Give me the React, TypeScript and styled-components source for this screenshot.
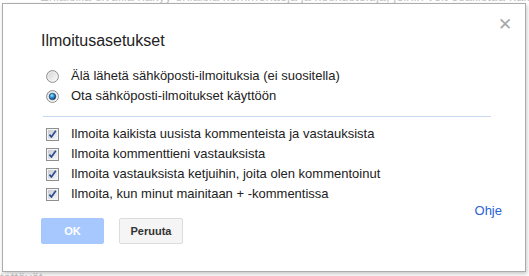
import React from "react";
import styled, { createGlobalStyle } from "styled-components";

const Global = createGlobalStyle`
  html, body { margin: 0; padding: 0; background: #fff; overflow: hidden; }
  body { font-family: "Liberation Sans", Arial, sans-serif; }
`;

const Page = styled.div`
  position: relative;
  width: 529px;
  height: 276px;
  overflow: hidden;
  display: flex;
  flex-direction: column;
  justify-content: space-between;
`;

const FaintLine = styled.div<{ $top?: boolean }>`
  font-size: 13px;
  line-height: 13px;
  color: #c4c4c4;
  white-space: nowrap;
  margin-top: ${(p) => (p.$top ? "-10px" : "0")};
  margin-bottom: ${(p) => (p.$top ? "0" : "-8px")};
  padding-left: ${(p) => (p.$top ? "40px" : "0")};
`;

const Dialog = styled.div`
  position: absolute;
  left: 2px;
  top: 3px;
  width: 524px;
  height: 269px;
  box-sizing: border-box;
  background: #fff;
  border: 1px solid #acacac;
  box-shadow: 1px 2px 4px rgba(0, 0, 0, 0.22);
  padding: 27px 23px 0 38px;
  display: flex;
  flex-direction: column;
  color: #222;
`;

const Close = styled.span`
  position: absolute;
  right: 13px;
  top: 12px;
  font-size: 17px;
  line-height: 17px;
  color: #a8a8a8;
  cursor: pointer;
`;

const Title = styled.div`
  font-size: 16px;
  line-height: 20px;
  color: #222;
  margin-bottom: 15px;
`;

const OptionList = styled.div`
  display: flex;
  flex-direction: column;
`;

const Row = styled.label`
  display: flex;
  align-items: center;
  height: 20px;
  font-size: 13px;
  line-height: 20px;
  padding-left: 5px;
  gap: 12px;
  color: #222;
`;

const Separator = styled.div`
  height: 1px;
  width: 448px;
  margin-left: 2px;
  background: #c9d9f2;
  margin: 10px 0 7px 2px;
`;

const HelpRow = styled.div`
  display: flex;
  justify-content: flex-end;
  height: 14px;
  line-height: 14px;
`;

const HelpLink = styled.a`
  font-size: 13px;
  color: #2a62d8;
  text-decoration: none;
`;

const Buttons = styled.div`
  display: flex;
  gap: 15px;
`;

const Button = styled.button<{ $primary?: boolean }>`
  box-sizing: border-box;
  height: 26px;
  min-width: ${(p) => (p.$primary ? "63px" : "64px")};
  padding: 0 9px;
  border-radius: 2px;
  font-family: "Liberation Sans", Arial, sans-serif;
  font-size: 11px;
  font-weight: bold;
  border: 1px solid ${(p) => (p.$primary ? "#a6c6fd" : "#dcdcdc")};
  background: ${(p) => (p.$primary ? "#a6c8ff" : "#f5f5f5")};
  color: ${(p) => (p.$primary ? "#fff" : "#333")};
`;

const Radio = ({ checked }: { checked?: boolean }) => (
  <svg width="13" height="13" viewBox="0 0 13 13">
    <defs>
      <linearGradient id={`rg${checked ? 1 : 0}`} x1="0" y1="0" x2="1" y2="1">
        <stop offset="0" stopColor="#d0d0d0" />
        <stop offset="1" stopColor="#ffffff" />
      </linearGradient>
      <radialGradient id="dot" cx="0.4" cy="0.35" r="0.7">
        <stop offset="0" stopColor="#a8e4ff" />
        <stop offset="0.45" stopColor="#2e8fd3" />
        <stop offset="1" stopColor="#0b2f5c" />
      </radialGradient>
    </defs>
    <circle cx="6.5" cy="6.5" r="5.9" fill={`url(#rg${checked ? 1 : 0})`} stroke="#8d8d8d" strokeWidth="1" />
    <circle cx="6.5" cy="6.5" r="4.6" fill="none" stroke="#f2f2f2" strokeWidth="0.8" />
    {checked && <circle cx="6.5" cy="6.5" r="3.3" fill="url(#dot)" stroke="#173a66" strokeWidth="0.6" />}
  </svg>
);

const Check = () => (
  <svg width="13" height="13" viewBox="0 0 13 13">
    <defs>
      <linearGradient id="cb" x1="0" y1="0" x2="1" y2="1">
        <stop offset="0" stopColor="#c9ccd3" />
        <stop offset="1" stopColor="#f4f5f7" />
      </linearGradient>
    </defs>
    <rect x="0.5" y="0.5" width="12" height="12" fill="#f4f4f4" stroke="#8e8f8f" />
    <rect x="2" y="2" width="9" height="9" fill="url(#cb)" />
    <path d="M3.4 6.6 L5.4 9 L9.8 2.8" fill="none" stroke="#2b4d8f" strokeWidth="1.7" strokeLinejoin="round" />
  </svg>
);

export default function App() {
  return (
    <>
      <Global />
      <Page>
        <FaintLine $top>
          Erilaisilla sivuilla näkyy erilaisia kommentteja ja keskusteluja, joihin voit osallistua halutessasi
        </FaintLine>
        <FaintLine>tettävät</FaintLine>
        <Dialog>
          <Close>✕</Close>
          <Title>Ilmoitusasetukset</Title>
          <OptionList>
            <Row>
              <Radio />
              Älä lähetä sähköposti-ilmoituksia (ei suositella)
            </Row>
            <Row>
              <Radio checked />
              Ota sähköposti-ilmoitukset käyttöön
            </Row>
          </OptionList>
          <Separator />
          <OptionList>
            <Row>
              <Check />
              Ilmoita kaikista uusista kommenteista ja vastauksista
            </Row>
            <Row>
              <Check />
              Ilmoita kommenttieni vastauksista
            </Row>
            <Row>
              <Check />
              Ilmoita vastauksista ketjuihin, joita olen kommentoinut
            </Row>
            <Row>
              <Check />
              Ilmoita, kun minut mainitaan + -kommentissa
            </Row>
          </OptionList>
          <HelpRow>
            <HelpLink href="#">Ohje</HelpLink>
          </HelpRow>
          <Buttons>
            <Button $primary>OK</Button>
            <Button>Peruuta</Button>
          </Buttons>
        </Dialog>
      </Page>
    </>
  );
}
